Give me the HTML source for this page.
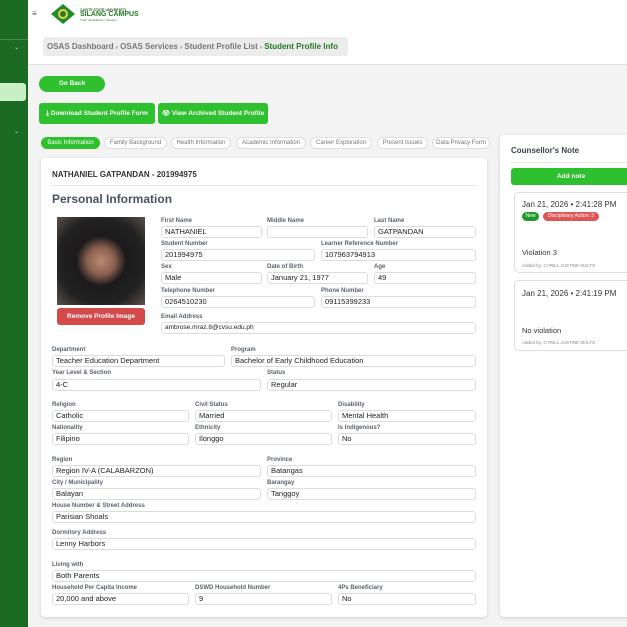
<!DOCTYPE html>
<html><head><meta charset="utf-8"><style>
*{margin:0;padding:0;box-sizing:border-box}
body{width:627px;height:627px;overflow:hidden;background:#f3f3f3;font-family:"Liberation Sans",sans-serif;position:relative}
.a{position:absolute}
.lb{position:absolute;font-size:6px;font-weight:bold;color:#5a6270}
.in{position:absolute;height:12px;border:1px solid #dcdcdc;border-radius:3px;background:#fff;font-size:7.5px;color:#222;padding-left:3px;line-height:10px;white-space:nowrap;overflow:hidden}
.tab{position:absolute;top:137px;height:12px;border:1px solid #ddd;border-radius:6px;background:#fff;font-size:6px;color:#777;line-height:10px;text-align:center}
.btn{position:absolute;background:#2ec02e;color:#fff;font-weight:bold;font-size:6.5px;text-align:center;border-radius:3px}
</style></head><body>
<div class="a" style="left:0;top:0;width:28px;height:627px;background:#1c6b24"></div>
<div class="a" style="left:0;top:39px;width:28px;height:1px;background:#3f8a46"></div>
<div class="a" style="left:0;top:83px;width:26px;height:18px;background:#c9f0c4;border-radius:0 3px 3px 0"></div>
<div class="a" style="left:14px;top:44px;font-size:6px;color:#cde">⌄</div>
<div class="a" style="left:14px;top:128px;font-size:6px;color:#cde">⌄</div>
<div class="a" style="left:28px;top:0;width:599px;height:65px;background:#fff;border-bottom:1px solid #e2e2e2"></div>
<div class="a" style="left:32px;top:9px;font-size:8px;color:#555">≡</div>
<svg class="a" style="left:51px;top:4px" width="24" height="20"><polygon points="12,0 24,10 12,20 0,10" fill="#1e8c2a"/><circle cx="12" cy="10" r="5" fill="#e7d34a"/><circle cx="12" cy="10" r="3" fill="#2a7a30"/></svg>
<div class="a" style="left:80px;top:8px;font-size:3.5px;font-weight:bold;color:#2a5c2a">CAVITE STATE UNIVERSITY</div>
<div class="a" style="left:80px;top:11px;font-size:7px;font-weight:bold;color:#1f7a25">SILANG CAMPUS</div>
<div class="a" style="left:80px;top:18px;font-size:3px;color:#1f7a25">Truth | Excellence | Service</div>
<div class="a" style="left:43px;top:37px;width:305px;height:19px;background:#ececec;border-radius:3px;font-size:8px;font-weight:bold;color:#777;line-height:19px;padding-left:4px;white-space:nowrap">OSAS Dashboard <span style="font-size:6px">›</span> OSAS Services <span style="font-size:6px">›</span> Student Profile List <span style="font-size:6px">›</span> <span style="color:#237a23">Student Profile Info</span></div>
<div class="btn" style="left:39px;top:76px;width:66px;height:16px;border-radius:8px;line-height:16px">Go Back</div>
<div class="btn" style="left:39px;top:103px;width:116px;height:21px;line-height:21px">⤓ Download Student Profile Form</div>
<div class="btn" style="left:158px;top:103px;width:110px;height:21px;line-height:21px">👁 View Archived Student Profile</div>
<div class="tab" style="left:41px;width:59px;background:#2ec02e;color:#fff;border-color:#2ec02e">Basic Information</div>
<div class="tab" style="left:104px;width:63px">Family Background</div>
<div class="tab" style="left:171px;width:60px">Health Information</div>
<div class="tab" style="left:236px;width:70px">Academic Information</div>
<div class="tab" style="left:310px;width:62px">Career Exploration</div>
<div class="tab" style="left:377px;width:51px">Present Issues</div>
<div class="tab" style="left:432px;width:58px">Data Privacy Form</div>
<div class="a" style="left:41px;top:158px;width:446px;height:459px;background:#fff;border-radius:4px;box-shadow:0 1px 3px rgba(0,0,0,.15)"></div>
<div class="a" style="left:52px;top:170px;font-size:8px;font-weight:bold;color:#333">NATHANIEL GATPANDAN - 201994975</div>
<div class="a" style="left:52px;top:185px;width:424px;height:1px;background:#e5e5e5"></div>
<div class="a" style="left:52px;top:192px;font-size:12px;font-weight:bold;color:#4a5260">Personal Information</div>
<div class="a" style="left:57px;top:217px;width:88px;height:88px;background:radial-gradient(ellipse at 50% 50%,#b88a70 0,#8a6050 22%,#1c1a1c 40%,#222 70%,#5b504a 100%)"></div>
<div class="btn" style="left:57px;top:308px;width:88px;height:17px;line-height:17px;background:#d44a4a">Remove Profile Image</div>
<div class="lb" style="left:161px;top:218px">First Name</div><div class="in" style="left:161px;top:226px;width:101px">NATHANIEL</div>
<div class="lb" style="left:267px;top:218px">Middle Name</div><div class="in" style="left:267px;top:226px;width:101px"></div>
<div class="lb" style="left:374px;top:218px">Last Name</div><div class="in" style="left:374px;top:226px;width:102px">GATPANDAN</div>
<div class="lb" style="left:161px;top:241px">Student Number</div><div class="in" style="left:161px;top:249px;width:154px">201994975</div>
<div class="lb" style="left:321px;top:241px">Learner Reference Number</div><div class="in" style="left:321px;top:249px;width:155px">107963794913</div>
<div class="lb" style="left:161px;top:264px">Sex</div><div class="in" style="left:161px;top:272px;width:101px">Male</div>
<div class="lb" style="left:267px;top:264px">Date of Birth</div><div class="in" style="left:267px;top:272px;width:101px">January 21, 1977</div>
<div class="lb" style="left:374px;top:264px">Age</div><div class="in" style="left:374px;top:272px;width:102px">49</div>
<div class="lb" style="left:161px;top:288px">Telephone Number</div><div class="in" style="left:161px;top:296px;width:154px">0264510230</div>
<div class="lb" style="left:321px;top:288px">Phone Number</div><div class="in" style="left:321px;top:296px;width:155px">09115399233</div>
<div class="lb" style="left:161px;top:314px">Email Address</div><div class="in" style="left:161px;top:322px;width:315px;font-size:6.5px">ambrose.mraz.8@cvsu.edu.ph</div>
<div class="lb" style="left:52px;top:347px">Department</div><div class="in" style="left:52px;top:355px;width:173px">Teacher Education Department</div>
<div class="lb" style="left:231px;top:347px">Program</div><div class="in" style="left:231px;top:355px;width:245px">Bachelor of Early Childhood Education</div>
<div class="lb" style="left:52px;top:370px">Year Level &amp; Section</div><div class="in" style="left:52px;top:379px;width:209px">4-C</div>
<div class="lb" style="left:267px;top:370px">Status</div><div class="in" style="left:267px;top:379px;width:209px">Regular</div>
<div class="lb" style="left:52px;top:402px">Religion</div><div class="in" style="left:52px;top:410px;width:137px">Catholic</div>
<div class="lb" style="left:195px;top:402px">Civil Status</div><div class="in" style="left:195px;top:410px;width:137px">Married</div>
<div class="lb" style="left:338px;top:402px">Disability</div><div class="in" style="left:338px;top:410px;width:138px">Mental Health</div>
<div class="lb" style="left:52px;top:425px">Nationality</div><div class="in" style="left:52px;top:433px;width:137px">Filipino</div>
<div class="lb" style="left:195px;top:425px">Ethnicity</div><div class="in" style="left:195px;top:433px;width:137px">Ilonggo</div>
<div class="lb" style="left:338px;top:425px">Is Indigenous?</div><div class="in" style="left:338px;top:433px;width:138px">No</div>
<div class="lb" style="left:52px;top:457px">Region</div><div class="in" style="left:52px;top:465px;width:209px">Region IV-A (CALABARZON)</div>
<div class="lb" style="left:267px;top:457px">Province</div><div class="in" style="left:267px;top:465px;width:209px">Batangas</div>
<div class="lb" style="left:52px;top:480px">City / Municipality</div><div class="in" style="left:52px;top:488px;width:209px">Balayan</div>
<div class="lb" style="left:267px;top:480px">Barangay</div><div class="in" style="left:267px;top:488px;width:209px">Tanggoy</div>
<div class="lb" style="left:52px;top:503px">House Number &amp; Street Address</div><div class="in" style="left:52px;top:511px;width:424px">Parisian Shoals</div>
<div class="lb" style="left:52px;top:530px">Dormitory Address</div><div class="in" style="left:52px;top:538px;width:424px">Lenny Harbors</div>
<div class="lb" style="left:52px;top:562px">Living with</div><div class="in" style="left:52px;top:570px;width:424px">Both Parents</div>
<div class="lb" style="left:52px;top:585px">Household Per Capita Income</div><div class="in" style="left:52px;top:593px;width:137px">20,000 and above</div>
<div class="lb" style="left:195px;top:585px">DSWD Household Number</div><div class="in" style="left:195px;top:593px;width:137px">9</div>
<div class="lb" style="left:338px;top:585px">4Ps Beneficiary</div><div class="in" style="left:338px;top:593px;width:138px">No</div>
<div class="a" style="left:500px;top:135px;width:140px;height:482px;background:#fff;border-radius:4px;box-shadow:0 1px 3px rgba(0,0,0,.15)"></div>
<div class="a" style="left:511px;top:146px;font-size:8px;font-weight:bold;color:#3a4250">Counsellor's Note</div>
<div class="a" style="left:511px;top:162px;width:120px;height:1px;background:#e5e5e5"></div>
<div class="btn" style="left:511px;top:168px;width:120px;height:17px;line-height:17px;border-radius:3px">Add note</div>
<div class="a" style="left:514px;top:192px;width:120px;height:81px;border:1px solid #ddd;border-radius:5px;background:#fff"></div>
<div class="a" style="left:522px;top:200px;font-size:8px;color:#333">Jan 21, 2026 • 2:41:28 PM</div>
<div class="a" style="left:522px;top:212px;width:17px;height:9px;border-radius:5px;background:#1e9a2a;color:#fff;font-size:5px;line-height:9px;text-align:center">New</div>
<div class="a" style="left:543px;top:212px;width:56px;height:9px;border-radius:5px;background:#dd5555;color:#fff;font-size:5px;line-height:9px;text-align:center">Disciplinary Action: 3</div>
<div class="a" style="left:522px;top:248px;font-size:7.5px;color:#333">Violation 3</div>
<div class="a" style="left:522px;top:263px;font-size:4.5px;color:#888">Added by: CYRILL JUSTINE MALTO</div>
<div class="a" style="left:514px;top:280px;width:120px;height:71px;border:1px solid #ddd;border-radius:5px;background:#fff"></div>
<div class="a" style="left:522px;top:289px;font-size:8px;color:#333">Jan 21, 2026 • 2:41:19 PM</div>
<div class="a" style="left:522px;top:326px;font-size:7.5px;color:#333">No violation</div>
<div class="a" style="left:522px;top:340px;font-size:4.5px;color:#888">Added by: CYRILL JUSTINE MALTO</div>
</body></html>
